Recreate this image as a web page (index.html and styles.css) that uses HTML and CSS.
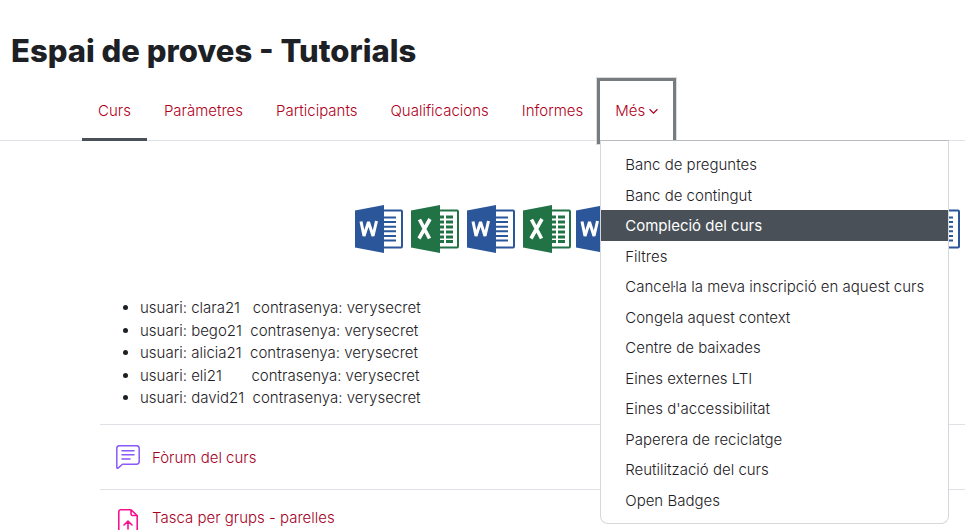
FILE: index.html
```html
<!DOCTYPE html>
<html lang="ca">
<head>
<meta charset="utf-8">
<meta name="viewport" content="width=device-width, initial-scale=1">
<title>Espai de proves - Tutorials</title>
<link rel="stylesheet" href="styles.css">
</head>
<body>
<svg class="defs" aria-hidden="true">
  <symbol id="word" viewBox="0 0 48 48">
    <rect x="26" y="5.5" width="21" height="37" rx="1" fill="#fff" stroke="#2b579a" stroke-width="2"/>
    <path d="M28 12.5h13M28 17h13M28 21.700h13M28 26.300h13M28 31h13M28 35.500h13" stroke="#2b579a" stroke-width="2"/>
    <path d="M0 5.500 29 0v48L0 42.500z" fill="#2b579a"/>
    <path d="m6 16.500 3 14.500 4.500-14 4.500 14 3.500-15" fill="none" stroke="#fff" stroke-width="3" stroke-linejoin="bevel"/>
  </symbol>
  <symbol id="excel" viewBox="0 0 48 48">
    <rect x="26" y="5.500" width="21" height="37" rx="1" fill="#fff" stroke="#217346" stroke-width="2"/>
    <path d="M28 12h5M35 12h7M28 17h5M35 17h7M28 22h5M35 22h7M28 27h5M35 27h7M28 32h5M35 32h7M28 36.500h5M35 36.500h7" stroke="#217346" stroke-width="3"/>
    <path d="M0 5.500 29 0v48L0 42.500z" fill="#217346"/>
    <path d="m8.500 14.500 10 19M19 14 8 33.500" stroke="#fff" stroke-width="3.600"/>
  </symbol>
</svg>

<header>
  <h1 class="title">Espai de proves - Tutorials</h1>
  <nav class="tabs" aria-label="Curs">
    <a class="tab active" href="#curs">Curs</a>
    <a class="tab" href="#parametres">Paràmetres</a>
    <a class="tab" href="#participants">Participants</a>
    <a class="tab" href="#qualificacions">Qualificacions</a>
    <a class="tab" href="#informes">Informes</a>
    <div class="more">
      <button class="tab focused" type="button" aria-haspopup="true" aria-expanded="true">Més
        <svg class="chevron" viewBox="0 0 8 6" aria-hidden="true"><path d="m0.500 1 3.500 3.500 3.500-3.500" fill="none" stroke="currentColor" stroke-width="1.100"/></svg>
      </button>
      <div class="menu">
        <a href="#m1">Banc de preguntes</a>
        <a href="#m2">Banc de contingut</a>
        <a class="current" href="#m3">Compleció del curs</a>
        <a href="#m4">Filtres</a>
        <a href="#m5">Cancel·la la meva inscripció en aquest curs</a>
        <a href="#m6">Congela aquest context</a>
        <a href="#m7">Centre de baixades</a>
        <a href="#m8">Eines externes LTI</a>
        <a href="#m9">Eines d'accessibilitat</a>
        <a href="#m10">Paperera de reciclatge</a>
        <a href="#m11">Reutilització del curs</a>
        <a href="#m12">Open Badges</a>
      </div>
    </div>
  </nav>
</header>

<main class="content">
  <div class="apps" aria-hidden="true">
    <div class="group">
      <svg><use href="#word"/></svg><svg><use href="#excel"/></svg><svg><use href="#word"/></svg><svg><use href="#excel"/></svg>
    </div>
    <div class="group">
      <svg><use href="#word"/></svg><svg><use href="#excel"/></svg><svg><use href="#word"/></svg><svg><use href="#excel"/></svg><svg><use href="#word"/></svg><svg><use href="#excel"/></svg><svg><use href="#word"/></svg>
    </div>
  </div>
  <ul class="users">
    <li>usuari: clara21&nbsp;&nbsp; contrasenya: verysecret</li>
    <li>usuari: bego21&nbsp; contrasenya: verysecret</li>
    <li>usuari: alicia21&nbsp; contrasenya: verysecret</li>
    <li>usuari: eli21&nbsp;&nbsp;&nbsp;&nbsp;&nbsp;&nbsp; contrasenya: verysecret</li>
    <li>usuari: david21&nbsp; contrasenya: verysecret</li>
  </ul>
  <div class="activity">
    <svg viewBox="0 0 24 24" fill="none" stroke="#8a58fb" stroke-width="1.500" stroke-linejoin="round" stroke-linecap="round" aria-hidden="true">
      <path d="M3.500 0.800h17a2.700 2.700 0 0 1 2.700 2.700v13a2.700 2.700 0 0 1-2.700 2.700H6.500L2 23.100q-1.200.500-1.200-.800V3.500A2.700 2.700 0 0 1 3.500.800z"/>
      <path d="M6 5.700h12M6 9.800h12M6 13.900h8"/>
    </svg>
    <a href="#forum">Fòrum del curs</a>
  </div>
  <div class="activity top">
    <svg viewBox="0 0 24 24" fill="none" stroke="#f7138f" stroke-width="1.600" stroke-linejoin="round" stroke-linecap="round" aria-hidden="true">
      <path d="M15 .8H5A2.200 2.200 0 0 0 2.800 3v18A2.200 2.200 0 0 0 5 23.200h14a2.200 2.200 0 0 0 2.200-2.200V6.500zM15 .8V5a1.500 1.500 0 0 0 1.500 1.500h4.700M12 20v-7.500M8 16l4-3.800 4 3.800"/>
    </svg>
    <a href="#tasca">Tasca per grups - parelles</a>
  </div>
</main>
</body>
</html>
```
FILE: styles.css
```css
* { box-sizing: border-box; }
html { overflow: hidden; }
body {
  margin: 0;
  background: #fff;
  color: #1d2125;
  font: 300 15px/1.5 Inter, "Liberation Sans", sans-serif;
}
a { color: #a5001e; text-decoration: none; }
.defs { position: absolute; width: 0; height: 0; }
.title {
  margin: 0;
  padding: 28px 11px 8px;
  font-size: 31px;
  font-weight: 800;
  line-height: 45px;
}
.tabs {
  display: flex;
  gap: 1px;
  padding-left: 82px;
  border-bottom: 1px solid #dee2e6;
}
.tab {
  display: block;
  height: 60px;
  margin-bottom: -1px;
  padding: 19px 16px 16px;
  border: 0;
  border-bottom: 3px solid transparent;
  background: transparent;
  color: #b00020;
  font: inherit;
  line-height: 22px;
  white-space: nowrap;
}
.active { border-bottom-color: #495057; }
.more { position: relative; }
.focused { padding-right: 15px; padding-left: 15px; box-shadow: 0 0 0 3px #777c81, 0 0 0 4px #d9dbdc; }
.chevron { width: 9px; height: 7px; vertical-align: 1px; }
.menu {
  position: absolute;
  z-index: 1;
  top: 100%;
  left: 0;
  width: max-content;
  padding: 8px 0;
  border: 1px solid #d5d7da;
  border-top-color: #b7babf;
  border-radius: 0 0 8px 8px;
  background: #fff;
}
.menu a {
  display: block;
  padding: 5px 24px 3px;
  color: #1d2125;
}
.menu .current { background: #495057; color: #fff; font-weight: 400; }
.content { padding-left: 100px; }
.apps {
  display: flex;
  gap: 5px;
  padding: 64px 0 44px 255px;
}
.group { display: flex; gap: 8px; }
.group svg { flex: none; width: 48px; height: 48px; }
.users { margin: 0; padding: 0 0 14px 40px; }
.activity {
  display: flex;
  align-items: center;
  gap: 12px;
  padding: 20px 16px;
  border-top: 1px solid #dee2e6;
}
.activity svg { flex: none; width: 24px; height: 24px; }
.activity a { line-height: 20px; padding-top: 2px; }
.activity.top { align-items: flex-start; padding-top: 19px; }
.activity.top a { padding-top: 0; line-height: 18px; }
```
